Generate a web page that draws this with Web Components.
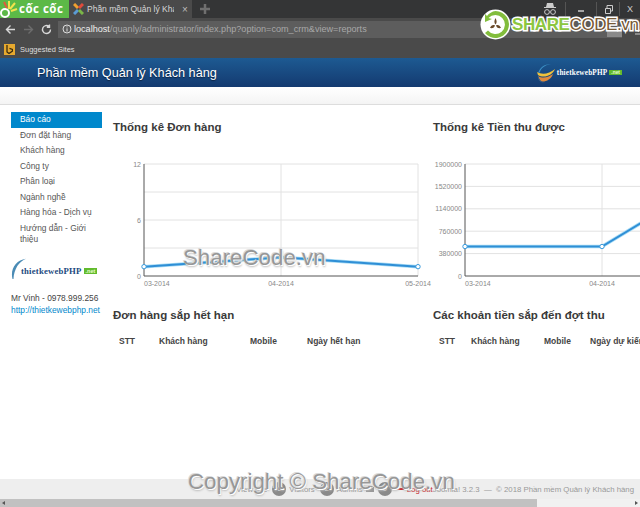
<!DOCTYPE html>
<html lang="vi">
<head>
<meta charset="utf-8">
<title>Phần mềm Quản lý Khách hàng</title>
<style>
  html, body { margin: 0; padding: 0; height: 100%; overflow: hidden; background: #fff; }
  body { font-family: "Liberation Sans", Arial, sans-serif; font-size: 9px; color: #333; }
  #page { position: relative; display: flex; flex-direction: column; width: 640px; height: 507px; overflow: hidden; }
  #main { flex: 1; display: flex; min-height: 0; }
  #content { flex: 1; min-width: 0; display: grid; grid-template-columns: 320px 320px; grid-template-rows: 203px auto; padding-left: 11px; overflow: hidden; align-content: start; }
</style>
</head>
<body>
<template id="brand-tpl">
  <style>
    :host { display: inline-flex; align-items: center; font-family: "Liberation Serif", serif; font-weight: bold; letter-spacing: .2px; }
    svg { flex: none; }
    .net { margin: var(--word-drop, 0) 0 0 2px; padding: 0 2px; background: #62bb2d; color: #e8ffd0; font: bold var(--net-size, .68em)/1.200 "Liberation Sans", sans-serif; letter-spacing: 0; }
    .word { margin: var(--word-drop, 0) 0 0 var(--word-gap, 1px); }
    :host([arc]) .globe { display: none; }
    :host(:not([arc])) .arc { display: none; }
  </style>
  <svg width="20" height="22" viewBox="0 0 20 22">
    <g class="globe">
      <path d="M2 12C3 6 8 2 15 2C9 3 5 6 4 10Z" fill="#3b8fc4"/>
      <path d="M1 10C6 13 13 12 19 7C17 13 8 17 2 13Z" fill="#efc23c"/>
      <path d="M2 14C7 17 13 15 17 12C15 18 8 21 4 19Z" fill="#e08a3c"/>
      <path d="M2 14C3 17 5 20 9 21C5 21 1 18 2 14Z" fill="#2f5d8c"/>
    </g>
    <g class="arc">
      <path d="M1.500 21C-1 11 5 2 15 .8C8 3.500 3 11 2.500 21Z" fill="#4a8bb5"/>
    </g>
  </svg>
  <span class="word">thietkewebPHP</span><span class="net">.net</span>
</template>

<script>
  class BrowserChrome extends HTMLElement {
    constructor() {
      super();
      this.attachShadow({ mode: 'open' });
    }

    connectedCallback() {
      this.shadowRoot.innerHTML = `
        <style>
          :host { display: block; font-family: "Liberation Sans", sans-serif; color: #ddd; flex: none; }
          .tabs { height: 18px; background: #343536; display: flex; align-items: stretch; }
          .brand { width: 69px; background: #5cb947; display: flex; align-items: center; overflow: hidden; }
          .brand span { color: #fff; font: bold 11.500px/18px "Open Sans", sans-serif; letter-spacing: .5px; margin-left: 1px; white-space: nowrap; }
          .tab { width: 123px; background: #4a4a4a; display: flex; align-items: center; font-size: 8.500px; color: #d8d8d8; white-space: nowrap; overflow: hidden; }
          .tab svg { margin: 0 3px 0 4px; flex: none; }
          .tab b { font-weight: normal; width: 87px; overflow: hidden; }
          .tab i { font-style: normal; color: #bbb; font-size: 10px; margin-left: 8px; }
          .plus { margin-left: 6px; width: 14px; display: flex; align-items: center; justify-content: center; }
          .spacer { flex: 1; }
          .controls { display: flex; align-items: center; color: #ccc; }
          .win { width: 30px; height: 14px; display: flex; align-items: center; justify-content: center; border-left: 1px solid #555; }
          .bar { height: 22px; background: #4a4a4a; display: flex; align-items: center; }
          .nav { width: 58px; display: flex; align-items: center; flex: none; }
          .nav svg { display: block; }
          .address { width: 564px; height: 17px; background: #5d5d5d; display: flex; align-items: center; font-size: 9.100px; white-space: nowrap; overflow: hidden; color: #a8a8a8; box-sizing: border-box; padding-left: 4px; flex: none; }
          .address svg { margin-right: 2px; flex: none; }
          .address b { font-weight: normal; color: #ededed; }
          .address span { flex: 1; }
          .star { width: 15px; height: 10px; background: #8a8a8a; margin: 6px 0 0; flex: none; }
          .marks { height: 18px; background: #4a4a4a; display: flex; align-items: center; padding: 0 0 0 4px; font-size: 7.500px; color: #dedede; }
          .bing { width: 11px; height: 11px; background: #e7a92e; margin-right: 5px; display: flex; align-items: center; justify-content: center; }
        </style>
        <div class="tabs">
          <div class="brand">
            <svg width="18" height="18" viewBox="0 0 18 18" style="flex:none">
              <circle cx="5" cy="13" r="4" fill="none" stroke="#fff" stroke-width="2"/>
              <path d="M9 9L9 1M10 9L15 3M11 11L17 9" stroke="#f3e24c" stroke-width="2"/>
              <path d="M7 8L4 2" stroke="#e35b3c" stroke-width="2"/>
            </svg>
            <span>cốc cốc</span>
          </div>
          <div class="tab">
            <svg width="11" height="12" viewBox="0 0 11 12">
              <path d="M1 1L5 5" stroke="#f0a030" stroke-width="3"/>
              <path d="M10 1L6 5" stroke="#e04b3c" stroke-width="3"/>
              <path d="M1 11L5 7" stroke="#5b9bd5" stroke-width="3"/>
              <path d="M10 11L6 7" stroke="#7ab648" stroke-width="3"/>
            </svg>
            <b>Phần mềm Quản lý Khách</b><i>×</i>
          </div>
          <div class="plus">
            <svg width="12" height="12" viewBox="0 0 12 12"><path d="M6 1V11M1 6H11" stroke="#6f6f6f" stroke-width="2.500"/></svg>
          </div>
          <div class="spacer"></div>
          <div class="controls">
            <svg width="14" height="14" viewBox="0 0 14 14" style="margin-right:8px">
              <path d="M4 1H10L11 5H13V6H1V5H3Z" fill="#ccc"/>
              <circle cx="4" cy="10" r="2.400" fill="none" stroke="#ccc"/>
              <circle cx="10" cy="10" r="2.400" fill="none" stroke="#ccc"/>
            </svg>
            <div class="win"><svg width="8" height="8"><path d="M1 6H7" stroke="#ccc" stroke-width="1.500"/></svg></div>
            <div class="win" style="width:22px"><svg width="9" height="9"><path d="M1.500 3.500H6.500V8.500H1.500ZM3 3V.5H8.500V6H7" fill="none" stroke="#ccc"/></svg></div>
            <div class="win" style="width:20px;font-size:9px">X</div>
          </div>
        </div>
        <div class="bar">
          <div class="nav">
            <svg width="11" height="11" viewBox="0 0 11 11" style="margin-left:5px"><path d="M10 5.500H1.500M5.500 1.500L1.500 5.500L5.500 9.500" fill="none" stroke="#d8d8d8" stroke-width="1.400"/></svg>
            <svg width="11" height="11" viewBox="0 0 11 11" style="margin-left:7px"><path d="M1 5.500H9.500M5.500 1.500L9.500 5.500L5.500 9.500" fill="none" stroke="#6d6d6d" stroke-width="1.400"/></svg>
            <svg width="11" height="11" viewBox="0 0 11 11" style="margin-left:7px"><path d="M9.500 5.500A4 4 0 1 1 8 2.400M8.500 .5V3.200H5.800" fill="none" stroke="#d8d8d8" stroke-width="1.400"/></svg>
          </div>
          <div class="address">
            <svg width="10" height="10" viewBox="0 0 10 10"><circle cx="5" cy="5" r="4" fill="none" stroke="#ddd"/><path d="M5 4.300V7.500M5 2.400V3.400" stroke="#ddd"/></svg>
            <span><b>localhost</b>/quanly/administrator/index.php?option=com_crm&amp;view=reports</span>
            <div class="star"></div>
          </div>
          <svg width="7" height="11" viewBox="0 0 7 11" style="margin-left:13px;flex:none"><path d="M3.500 0V7M.5 4.500L3.500 7.500L6.500 4.500M0 10H7" fill="none" stroke="#ccc" stroke-width="1.200"/></svg>
        </div>
        <div class="marks">
          <span class="bing"><svg width="7" height="9" viewBox="0 0 7 9"><path d="M1 0V7L3 8.500L6.500 6V4.500L3.500 3.300" fill="none" stroke="#3a2c10" stroke-width="1.300"/></svg></span>
          Suggested Sites
        </div>
      `;
    }
  }
  customElements.define('browser-chrome', BrowserChrome);

  class BrandMark extends HTMLElement {
    constructor() {
      super();
      this.attachShadow({ mode: 'open' }).appendChild(document.getElementById('brand-tpl').content.cloneNode(true));
    }
  }
  customElements.define('brand-mark', BrandMark);

  class AppHeader extends HTMLElement {
    constructor() {
      super();
      this.attachShadow({ mode: 'open' }).innerHTML = `
        <style>
          :host { display: flex; flex: none; align-items: center; justify-content: space-between; height: 29px; padding: 0 18px 0 37px; background: linear-gradient(#1d5a92, #143a70); color: #fff; font-size: 12.700px; text-shadow: 0 1px 1px #0b2240; }
          ::slotted(brand-mark) { color: #fff; font-size: 7.200px; text-shadow: none; }
        </style>
        <slot name="title"></slot>
        <slot name="logo"></slot>
      `;
    }
  }
  customElements.define('app-header', AppHeader);

  class SideNav extends HTMLElement {
    constructor() {
      super();
      this.attachShadow({ mode: 'open' }).innerHTML = `
        <style>
          :host { display: block; flex: none; width: 91px; margin-left: 11px; padding-top: 7px; color: #555; font-size: 8.400px; line-height: 11px; }
          ul { list-style: none; margin: 0; padding: 0; }
          li { padding: 2px 9px; line-height: 11.500px; }
          li.active { background: #0088cc; color: #fff; }
          .logo { display: flex; margin: 10px 0 13px; }
          .who { white-space: nowrap; color: #444; }
          a { color: #08c; text-decoration: none; white-space: nowrap; display: block; margin-top: 1px; }
          brand-mark { color: #1d4a80; font-size: 8.700px; --word-gap: -10px; --word-drop: 5px; --net-size: 5.500px; }
        </style>
        <ul>
          <li class="active">Báo cáo</li>
          <li>Đơn đặt hàng</li>
          <li>Khách hàng</li>
          <li>Công ty</li>
          <li>Phân loại</li>
          <li>Ngành nghề</li>
          <li>Hàng hóa - Dịch vụ</li>
          <li>Hướng dẫn - Giới thiệu</li>
        </ul>
        <div class="logo"><brand-mark arc></brand-mark></div>
        <div class="who">Mr Vinh - 0978.999.256</div>
        <a href="#">http://thietkewebphp.net</a>
      `;
    }
  }
  customElements.define('side-nav', SideNav);

  class LineChart extends HTMLElement {
    constructor() {
      super();
      this.attachShadow({ mode: 'open' });
    }

    connectedCallback() {
      const yLabels = this.getAttribute('y-labels').split(',');
      const xLabels = this.getAttribute('x-labels').split(',');
      const values = this.getAttribute('values').split(',').map(Number);
      const lines = Number(this.getAttribute('lines'));
      const max = Number(yLabels[yLabels.length - 1]);
      const left = Number(this.getAttribute('left'));
      const step = 137;
      const top = 6, bottom = 118;
      const w = step * 2;
      const xAt = (i) => left + i * step;
      const yAt = (v) => bottom - (v / max) * (bottom - top);
      let grid = '';
      for (let i = 1; i <= lines; i++) {
        const y = bottom - ((bottom - top) * i) / lines;
        grid += `<path d="M${left} ${y}H${left + w}" stroke="#e2e2e2"/>`;
      }
      grid += `<path d="M${left + step} ${top}V${bottom}M${left + w} ${top}V${bottom}" stroke="#e2e2e2"/>`;
      const ticks = yLabels.map((label, i) => {
        const y = bottom - ((bottom - top) * i) / (yLabels.length - 1);
        return `<text x="${left - 3}" y="${y + 2.500}" text-anchor="end">${label}</text>`;
      }).join('');
      // first label starts at the axis, the others sit centred under their grid line
      const xTicks = xLabels.map((label, i) => `<text x="${xAt(i)}" y="${bottom + 10}" text-anchor="${i ? 'middle' : 'start'}">${label}</text>`).join('');
      const pts = values.map((v, i) => `${xAt(i)},${yAt(v)}`).join(' ');
      const dots = values.map((v, i) => `<circle cx="${xAt(i)}" cy="${yAt(v)}" r="2.200" fill="#fff" stroke="#3a9bdc"/>`).join('');
      this.shadowRoot.innerHTML = `
        <style>
          :host { display: block; margin-top: 24px; }
          svg { display: block; overflow: hidden; }
          text { font: 7px "Liberation Sans", sans-serif; fill: #888; }
        </style>
        <svg width="320" height="132" viewBox="0 0 320 132">
          ${grid}
          <path d="M${left} ${top}V${bottom}H${left + w}" fill="none" stroke="#555"/>
          ${ticks}${xTicks}
          <polyline points="${pts}" fill="none" stroke="#a9dcf5" stroke-width="3.500"/>
          <polyline points="${pts}" fill="none" stroke="#2f8fd6" stroke-width="2"/>
          ${dots}
        </svg>
      `;
    }
  }
  customElements.define('line-chart', LineChart);

  class ReportPanel extends HTMLElement {
    constructor() {
      super();
      this.attachShadow({ mode: 'open' }).innerHTML = `
        <style>
          :host { display: block; color: #333; }
          h3 { margin: 0; font: bold 11.500px/14px "Liberation Sans", sans-serif; color: #3a3a3a; white-space: nowrap; }
        </style>
        <h3><slot name="heading"></slot></h3>
        <slot></slot>
      `;
    }
  }
  customElements.define('report-panel', ReportPanel);

  class ReportTable extends HTMLElement {
    constructor() {
      super();
      this.attachShadow({ mode: 'open' });
    }

    connectedCallback() {
      const cols = this.getAttribute('cols').split(',').map((c) => c.split(':'));
      this.shadowRoot.innerHTML = `
        <style>
          :host { display: flex; margin: 14px 0 0 6px; font: bold 8.500px/11px "Liberation Sans", sans-serif; color: #444; white-space: nowrap; overflow: hidden; }
          span { display: block; flex: none; }
        </style>
        ${cols.map(([label, w]) => `<span style="width:${w}px">${label}</span>`).join('')}
      `;
    }
  }
  customElements.define('report-table', ReportTable);

  class AppFooter extends HTMLElement {
    constructor() {
      super();
      this.attachShadow({ mode: 'open' }).innerHTML = `
        <style>
          :host { display: block; flex: none; font-size: 7.800px; color: #999; }
          .status { height: 20px; background: #eee; display: flex; align-items: center; justify-content: flex-end; padding-right: 6px; white-space: nowrap; }
          .status > * { flex: none; }
          .badge { width: 14px; height: 14px; line-height: 14px; border-radius: 7px; background: #8a8a8a; color: #ddd; text-align: center; margin: 0 3px 0 5px; font-size: 7.500px; }
          .out { color: #c5262a; margin-left: 3px; }
          .dash { width: 8px; height: 1.500px; background: #c5262a; margin-left: 1px; }
          .scroll { height: 8px; background: #f1f1f1; display: flex; align-items: center; justify-content: flex-end; }
          .thumb { width: 537px; height: 8px; background: #c1c1c1; margin-right: auto; position: relative; }
          .thumb::before { content: ""; position: absolute; left: 2px; top: 1.500px; border: 2.500px solid transparent; border-left: 0; border-right: 3px solid #555; }
          .arrow { border: 2.500px solid transparent; border-right: 0; border-left: 3px solid #555; margin-right: 2px; }
        </style>
        <div class="status">
          <span>View site</span><span class="badge">0</span>
          <span>Visitors</span><span class="badge">2</span>
          <span>Admins</span>
          <svg width="8" height="6" viewBox="0 0 8 6" style="margin-left:3px"><rect width="8" height="6" fill="#999"/><path d="M0 0L4 3L8 0" fill="none" stroke="#eee"/></svg>
          <span class="badge" style="margin-left:4px">0</span>
          <span class="dash"></span><span class="out">Log out</span>
          <span>Joomla! 3.2.3 &nbsp;—&nbsp; © 2018 Phần mềm Quản lý Khách hàng</span>
        </div>
        <div class="scroll"><div class="thumb"></div><div class="arrow"></div></div>
      `;
    }
  }
  customElements.define('app-footer', AppFooter);

  class ShareWatermark extends HTMLElement {
    constructor() {
      super();
      this.attachShadow({ mode: 'open' }).innerHTML = `
        <style>
          :host { position: absolute; display: block; white-space: nowrap; font-family: "Liberation Sans", sans-serif; color: #979797; text-shadow: 1px 1px 0 #fff, -1px -1px 0 #d9d9d9, 1px 2px 2px #bbb; }
        </style>
        <slot></slot>
      `;
    }
  }
  customElements.define('share-watermark', ShareWatermark);

  class ShareLogo extends HTMLElement {
    constructor() {
      super();
      this.attachShadow({ mode: 'open' }).innerHTML = `
        <style>
          :host { position: absolute; left: 480px; top: 9px; display: flex; align-items: center; font: 17px/24px "Liberation Sans", sans-serif; white-space: nowrap; letter-spacing: -.4px; }
          svg { flex: none; margin-right: 1px; }
          .a, .b { -webkit-text-stroke: 3px #fff; paint-order: stroke fill; }
          .a { color: #8cc63f; font-weight: bold; }
          .b { color: #7a5a34; }
        </style>
        <svg width="31" height="31" viewBox="0 0 31 31">
          <circle cx="15.500" cy="15.500" r="15" fill="#fff"/>
          <path d="M15.500 2A13.500 13.500 0 1 1 5 24L8 21.500A9.500 9.500 0 1 0 8.500 9L12 10L5 13L5 5L7 7A13.500 13.500 0 0 1 15.500 2Z" fill="#82bd3c"/>
          <path d="M15.500 9C17 12 17 14 15.500 15.500C14 14 14 12 15.500 9ZM21 19C18 19.500 16.500 18.500 16 16.500C18 15.500 20 16.500 21 19ZM10 19C11 16.500 13 15.500 15 16.500C14.500 18.500 13 19.500 10 19Z" fill="#6b4a2a"/>
        </svg>
        <span class="a">SHARE</span><span class="b">CODE.vn</span>
      `;
    }
  }
  customElements.define('share-logo', ShareLogo);

  class StripBar extends HTMLElement {
    constructor() {
      super();
      this.attachShadow({ mode: 'open' }).innerHTML = `
        <style>
          :host { display: block; flex: none; height: 18px; background: linear-gradient(#ffffff, #f4f4f4); border-bottom: 1px solid #ddd; box-sizing: border-box; }
        </style>
      `;
    }
  }
  customElements.define('strip-bar', StripBar);
</script>

<div id="page">
  <browser-chrome></browser-chrome>
  <app-header>
    <span slot="title">Phần mềm Quản lý Khách hàng</span>
    <brand-mark slot="logo"></brand-mark>
  </app-header>
  <strip-bar></strip-bar>
  <div id="main">
    <side-nav></side-nav>
    <div id="content">
      <report-panel style="padding-top:15px">
        <span slot="heading">Thống kê Đơn hàng</span>
        <line-chart left="31" y-labels="0,6,12" x-labels="03-2014,04-2014,05-2014" values="1,2,1" lines="4"></line-chart>
      </report-panel>
      <report-panel style="padding-top:15px">
        <span slot="heading">Thống kê Tiền thu được</span>
        <line-chart left="32" y-labels="0,380000,760000,1140000,1520000,1900000" x-labels="03-2014,04-2014" values="500000,500000,1900000" lines="5"></line-chart>
      </report-panel>
      <report-panel>
        <span slot="heading">Đơn hàng sắp hết hạn</span>
        <report-table cols="STT:40,Khách hàng:91,Mobile:57,Ngày hết hạn:80"></report-table>
      </report-panel>
      <report-panel>
        <span slot="heading">Các khoản tiền sắp đến đợt thu</span>
        <report-table cols="STT:32,Khách hàng:73,Mobile:46,Ngày dự kiến thu:90"></report-table>
      </report-panel>
    </div>
  </div>
  <app-footer></app-footer>
  <share-logo></share-logo>
  <share-watermark style="left:183px;top:245px;font-size:22.300px">ShareCode.vn</share-watermark>
  <share-watermark style="left:188px;top:469px;font-size:22.300px">Copyright © ShareCode.vn</share-watermark>
</div>
</body>
</html>
